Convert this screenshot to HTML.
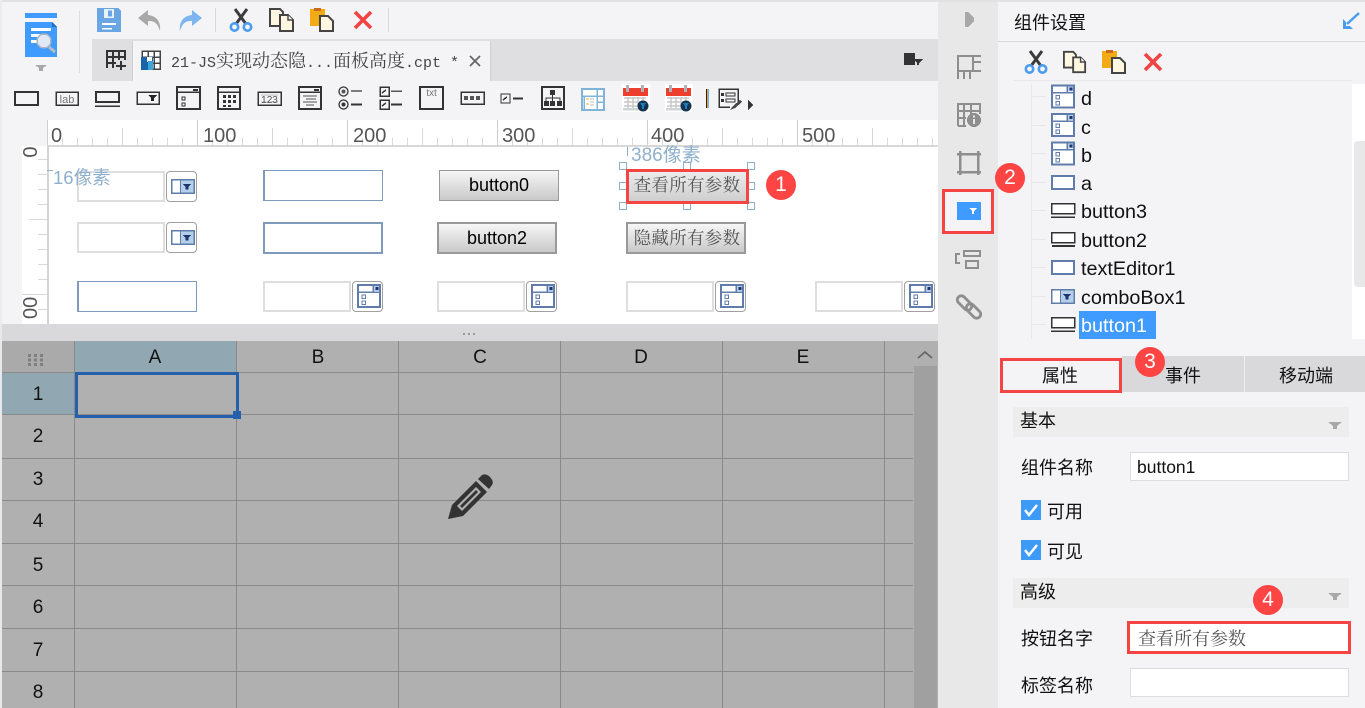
<!DOCTYPE html>
<html lang="zh"><head><meta charset="utf-8"><title>组件设置</title>
<style>
*{box-sizing:border-box}
html,body{margin:0;padding:0}
body{position:relative;width:1365px;height:708px;overflow:hidden;background:#f4f4f6;font-family:"Liberation Sans","Noto Sans CJK SC",sans-serif;color:#111}
.a{position:absolute}
.t{position:absolute;white-space:nowrap;line-height:1}
svg{position:absolute;overflow:visible;shape-rendering:crispEdges}
svg.s{shape-rendering:auto}
.box{position:absolute;background:#fff;border:2px solid #dedede}
.tb{position:absolute;background:#fff;border:2px solid #7f9aba}
.ib{position:absolute;background:#fff;border:1px solid #a0a0a0;border-radius:4px}
.btn{position:absolute;border:2px solid #999;background:linear-gradient(#f6f6f6,#c9c9c9);text-align:center;color:#000;font-size:18px}
.ser{font-family:"Liberation Serif","Noto Serif CJK SC",serif}
.h{position:absolute;width:8px;height:8px;border:1px solid #8fb0cc;background:#fff}
.red{position:absolute;border:3px solid #f44444}
.bd{position:absolute;width:30px;height:30px;border-radius:50%;background:#ff4444;color:#fff;font-size:21px;text-align:center;line-height:30px}
.ln{position:absolute;background:#8a8a8a}
.rn{position:absolute;left:2px;width:72px;text-align:center;font-size:19px;line-height:20px;color:#111}
.cn{position:absolute;top:348px;width:40px;text-align:center;font-size:19px;line-height:20px;color:#111}
.tr{position:absolute;left:1081px;font-size:19.8px;line-height:24px;white-space:nowrap;color:#111}
.st{position:absolute;left:1031px;width:15px;height:1px;background:#e8e8ea}
.lb{position:absolute;left:1021px;font-size:18px;line-height:22px;white-space:nowrap;color:#111}
.sec{position:absolute;left:1013px;width:336px;height:30px;background:#ededee;font-size:18px;line-height:28px;padding-left:7px;color:#111}
.ip{position:absolute;left:1130px;width:219px;height:29px;background:#fff;border:1px solid #dcdcdc}
.cb{position:absolute;left:1021px;width:20px;height:20px;background:#3d9bf5}
</style></head>
<body>
<svg width="0" height="0" style="position:absolute">
<defs>
<symbol id="cut" viewBox="0 0 24 24" overflow="visible"><path d="M6 1l11 15M18 1L7 16" stroke="#3c3c3c" stroke-width="3" fill="none"/><circle cx="5.500" cy="19" r="3.700" fill="none" stroke="#4a9cf0" stroke-width="2.600"/><circle cx="18.500" cy="19" r="3.700" fill="none" stroke="#4a9cf0" stroke-width="2.600"/></symbol>
<symbol id="copy" viewBox="0 0 26 24" overflow="visible"><path d="M1 1h10l3 3v14H1z" fill="#fff6e2" stroke="#444" stroke-width="2"/><path d="M11 7h8l5 5v11H11z" fill="#fff6e2" stroke="#444" stroke-width="2"/><path d="M19 7v5h5" fill="#fff" stroke="#444" stroke-width="1.500"/></symbol>
<symbol id="paste" viewBox="0 0 24 24" overflow="visible"><rect x="0" y="1" width="15" height="17" fill="#f2ab14"/><rect x="4" y="0" width="7" height="3" fill="#c96a1e"/><path d="M10 8h8l5 5v10H10z" fill="#fff6e2" stroke="#444" stroke-width="2"/></symbol>
<symbol id="del" viewBox="0 0 20 20" overflow="visible"><path d="M2 2l16 16M18 2L2 18" stroke="#f04545" stroke-width="3.600" fill="none"/></symbol>
<symbol id="combo" viewBox="0 0 24 15" overflow="visible"><rect x=".75" y=".75" width="22.500" height="13.500" fill="#fff" stroke="#5f7cab" stroke-width="1.500"/><rect x="9.500" y="1" width="13.500" height="13" fill="#b4cfea" stroke="#5f7cab"/><path d="M12 5h8l-2.500 3v2.500h-3V8z" fill="#22336e"/></symbol>
<symbol id="date" viewBox="0 0 24 24" overflow="visible"><rect x="1" y="1" width="22" height="22" fill="#fff" stroke="#5f7cab" stroke-width="2"/><path d="M1 8h22M16 1v7" stroke="#5f7cab" stroke-width="1.500"/><rect x="17" y="2" width="5" height="5" fill="#b4cfea"/><rect x="18.500" y="3" width="3" height="3" fill="#22336e"/><rect x="5" y="11" width="3.500" height="3.500" fill="#fff" stroke="#5f7cab"/><rect x="5" y="17" width="3.500" height="3.500" fill="#fff" stroke="#5f7cab"/></symbol>
<symbol id="btni" viewBox="0 0 24 15" overflow="visible"><rect x=".5" y=".5" width="23" height="10" fill="#fff" stroke="#333" stroke-width="1.500"/><path d="M0 14h24" stroke="#333" stroke-width="1.500"/></symbol>
<symbol id="cal" viewBox="0 0 28 28" overflow="visible"><rect width="28" height="28" fill="#fff"/><rect x="1" y="4" width="25" height="8" fill="#ee3f2e"/><rect x="4" y="1" width="3" height="7" fill="#a9b6bc"/><rect x="19" y="1" width="3" height="7" fill="#a9b6bc"/><path d="M2 14h22M2 18h22M2 22h18M6 13v11M11 13v11M16 13v9M21 13v5" stroke="#c8c8c8" stroke-width="1.500"/><rect x="1" y="24" width="16" height="2.500" fill="#cfd4d4"/><circle cx="21" cy="22" r="5.500" fill="#16344e"/><path d="M18 19h6l-2 3v3h-2v-3z" fill="#1a7fc0"/></symbol>
</defs>
</svg>

<div class="a" style="left:0;top:0;width:1365px;height:2px;background:#e2e2e4"></div>
<div class="a" style="left:0;top:0;width:2px;height:341px;background:#ececee"></div>

<!-- logo -->
<svg width="32" height="44" style="left:25px;top:13px"><rect x="0" y="0" width="32" height="5" fill="#3f9bff"/><path d="M0 9h27l5 5v30H0z" fill="#3f9bff"/><path d="M27 9v5h5z" fill="#1f6fc8"/><path d="M6 15h20v3H6zM6 21h10v3H6zM6 27h8v3H6z" fill="#fff"/><circle cx="19" cy="28" r="7" fill="#dfe9f4" stroke="#aab4c0" stroke-width="1.500"/><path d="M24 34l6 5" stroke="#b5bcc4" stroke-width="3"/></svg>
<svg width="12" height="6" style="left:35px;top:65px"><path d="M0 0h12L8 3v3H4V3z" fill="#a8a8a8"/></svg>
<div class="a" style="left:79px;top:11px;width:1px;height:62px;background:#dcdcde"></div>

<!-- main toolbar -->
<svg width="24" height="24" style="left:97px;top:8px"><path d="M0 0h21l3 3v21H0z" fill="#6ba6e4"/><rect x="7" y="1" width="10" height="9" fill="#e8f2fc"/><rect x="11" y="2.500" width="4" height="6" fill="#6ba6e4"/><path d="M5 15h14v2H5zM5 20h10v1.500H5z" fill="#fff"/></svg>
<svg class="s" width="26" height="24" style="left:137px;top:8px"><path d="M11 2L1 10l10 8v-5c7-.5 10 3 12 10 1-9-3-15-12-16z" fill="#a8a8a8"/></svg>
<svg class="s" width="26" height="24" style="left:177px;top:8px"><path d="M15 2l10 8-10 8v-5C8 12.500 5 16 3 23 2 14 6 8 15 7z" fill="#7cb5f0"/></svg>
<div class="a" style="left:215px;top:8px;width:1px;height:24px;background:#d8d8da"></div>
<svg class="s" width="24" height="24" style="left:229px;top:8px"><use href="#cut" width="24" height="24"/></svg>
<svg class="s" width="26" height="24" style="left:269px;top:8px"><use href="#copy" width="26" height="24"/></svg>
<svg class="s" width="24" height="24" style="left:310px;top:8px"><use href="#paste" width="24" height="24"/></svg>
<svg class="s" width="20" height="20" style="left:353px;top:10px"><use href="#del" width="20" height="20"/></svg>
<div class="a" style="left:388px;top:8px;width:1px;height:24px;background:#d8d8da"></div>

<!-- tabs -->
<div class="a" style="left:92px;top:39px;width:846px;height:42px;background:#dfdfe1"></div>
<div class="a" style="left:132px;top:41px;width:359px;height:40px;background:#f4f4f6;border-left:1px solid #d0d0d2;border-right:1px solid #d0d0d2"></div>
<svg width="21" height="21" style="left:106px;top:50px"><path d="M1 18V1h18v9M1 7h18M1 13h9M7 1v17M13 1v9" fill="none" stroke="#333" stroke-width="2"/><path d="M15 11v9M10 16h10" stroke="#333" stroke-width="2"/></svg>
<svg width="20" height="20" style="left:141px;top:50px"><path d="M1 1h18v18H1zM1 7h18M1 13h18M7 1v18M13 1v18" fill="#fff" stroke="#444" stroke-width="1.500"/><rect x="0" y="7" width="12" height="13" fill="#1a64a8"/><rect x="6" y="7" width="5" height="5" fill="#fff"/><rect x="7" y="11" width="5" height="9" fill="#3aa6e0"/></svg>
<div class="t" style="left:171px;top:51px;font-family:'Liberation Mono','Noto Serif CJK SC',monospace;font-size:15px;line-height:18px;color:#444">21-JS<span style="font-family:'Noto Serif CJK SC',serif;font-size:18px">实现动态隐</span>...<span style="font-family:'Noto Serif CJK SC',serif;font-size:18px">面板高度</span>.cpt *</div>
<svg width="12" height="12" style="left:469px;top:55px" class="s"><path d="M1 1l10 10M11 1L1 11" stroke="#666" stroke-width="1.800"/></svg>
<svg width="19" height="15" style="left:904px;top:53px"><path d="M0 0h11v6h8l-4 4v2h-2v-2l-2-2v4H0z" fill="#333"/></svg>

<!-- widget toolbar -->
<svg width="26" height="15" style="left:14px;top:91px"><rect x="1" y="1" width="23" height="13" fill="none" stroke="#333" stroke-width="2"/></svg>
<svg width="25" height="15" style="left:55px;top:91px"><rect x="1" y="1" width="22" height="13" fill="none" stroke="#333" stroke-width="1.500"/><text x="12" y="12" text-anchor="middle" font-size="11" fill="#777" font-family="Liberation Sans">lab</text></svg>
<svg width="25" height="16" style="left:95px;top:91px"><rect x="1" y="1" width="23" height="10" fill="none" stroke="#333" stroke-width="2"/><path d="M0 15h25" stroke="#333" stroke-width="1.500"/></svg>
<svg width="25" height="15" style="left:136px;top:91px"><rect x="1" y="1" width="22" height="12" fill="none" stroke="#333" stroke-width="1.500"/><path d="M12 4h9l-3 3v3h-3V7z" fill="#222"/></svg>
<svg width="25" height="24" style="left:176px;top:86px"><rect x="1" y="1" width="23" height="22" fill="none" stroke="#333" stroke-width="2"/><path d="M1 6h23" stroke="#333" stroke-width="1.500"/><rect x="17" y="3" width="5" height="2" fill="#333"/><path d="M6 11h3v3H6zM6 17h3v3H6z" fill="none" stroke="#333"/></svg>
<svg width="24" height="24" style="left:217px;top:86px"><rect x="1" y="1" width="22" height="22" fill="none" stroke="#333" stroke-width="2"/><path d="M1 6h22" stroke="#333" stroke-width="1.500"/><path d="M6 9h3v3H6zM11 9h3v3h-3zM16 9h3v3h-3zM6 14h3v3H6zM11 14h3v3h-3zM16 14h3v3h-3zM6 19h3v2H6zM11 19h3v2h-3z" fill="#333"/></svg>
<svg width="25" height="15" style="left:257px;top:91px"><rect x="1" y="1" width="23" height="13" fill="none" stroke="#333" stroke-width="1.500"/><path d="M4 4h17M4 11h17" stroke="#bbb"/><text x="12.500" y="12" text-anchor="middle" font-size="10" fill="#555" font-family="Liberation Sans">123</text></svg>
<svg width="24" height="24" style="left:298px;top:86px"><rect x="1" y="1" width="22" height="22" fill="none" stroke="#333" stroke-width="2"/><path d="M1 6h22" stroke="#333" stroke-width="1.500"/><rect x="16" y="3" width="5" height="2" fill="#333"/><path d="M5 10h14M8 13h10M5 16h14M8 19h8" stroke="#555"/></svg>
<svg class="s" width="24" height="24" style="left:338px;top:86px"><circle cx="5.500" cy="5.500" r="4.500" fill="none" stroke="#333" stroke-width="1.300"/><circle cx="5.500" cy="5.500" r="2" fill="#555"/><circle cx="5.500" cy="18.500" r="4.500" fill="none" stroke="#333" stroke-width="1.300"/><circle cx="5.500" cy="18.500" r="2" fill="#333"/><path d="M13 5h11" stroke="#555" stroke-width="1.500"/><path d="M13 18.500h11" stroke="#333" stroke-width="2"/></svg>
<svg width="24" height="24" style="left:379px;top:86px"><rect x="1" y="1" width="9" height="9" fill="none" stroke="#333" stroke-width="1.500"/><rect x="1" y="14" width="9" height="9" fill="none" stroke="#333" stroke-width="1.500"/><path d="M3 7l4-3M3 20l4-3" stroke="#333" stroke-width="1.500"/><path d="M12 5h11" stroke="#555" stroke-width="1.500"/><path d="M12 18.500h11" stroke="#333" stroke-width="2"/></svg>
<svg width="25" height="24" style="left:419px;top:86px"><rect x="1" y="1" width="23" height="22" fill="none" stroke="#333" stroke-width="2"/><text x="12.500" y="10" text-anchor="middle" font-size="10" fill="#777" font-family="Liberation Sans">txt</text></svg>
<svg width="25" height="15" style="left:460px;top:91px"><rect x="1" y="1" width="23" height="12" fill="none" stroke="#333" stroke-width="1.500"/><path d="M4 5h4v4H4zM10 5h4v4h-4zM16 5h4v4h-4z" fill="#555"/></svg>
<svg width="24" height="12" style="left:500px;top:93px"><rect x="1" y="1" width="9" height="9" fill="none" stroke="#333" stroke-width="1.300"/><path d="M3 7l4-3" stroke="#333" stroke-width="1.500"/><path d="M13 5.500h10" stroke="#333" stroke-width="2"/></svg>
<svg width="24" height="24" style="left:541px;top:86px"><rect x="1" y="1" width="22" height="22" fill="#f4f4f6" stroke="#333" stroke-width="2"/><rect x="9" y="4" width="5" height="5" fill="#333"/><path d="M11.500 9v3M5 15v-3h14v3M11.500 12v3" stroke="#333" fill="none"/><path d="M3 15h5v5H3zM9 15h5v5H9zM16 15h5v5h-5z" fill="#333"/></svg>
<svg width="24" height="23" style="left:581px;top:88px"><rect x="1" y="1" width="22" height="21" fill="#fff" stroke="#7fb4d8" stroke-width="2"/><path d="M2 8h20M16 1v21M16 14h7M3 8v14" stroke="#7fb4d8" stroke-width="1.500"/><path d="M5 11h3M5 16h3" stroke="#f0a830"/><path d="M9 11h4M9 14h4M9 17h4" stroke="#bbb"/></svg>
<svg class="s" width="28" height="28" style="left:622px;top:84px"><use href="#cal" width="28" height="28"/></svg>
<svg class="s" width="28" height="28" style="left:665px;top:84px"><use href="#cal" width="28" height="28"/></svg>
<div class="a" style="left:706px;top:89px;width:1px;height:19px;background:#222"></div><div class="a" style="left:707px;top:89px;width:1px;height:19px;background:#f0a030"></div><div class="a" style="left:708px;top:89px;width:1px;height:19px;background:#6ab4f0"></div>
<svg width="28" height="24" style="left:718px;top:88px"><path d="M20 17V1H1v18h11" fill="none" stroke="#333" stroke-width="1.500"/><path d="M3 5h3v3H3zM3 11h3v3H3z" fill="#333"/><path d="M8 5h9v3H8zM8 11h9v3H8z" fill="none" stroke="#333"/><path d="M12 22l3-4 7-6 2 2-7 6z" fill="#444"/></svg>
<svg width="5" height="10" style="left:748px;top:100px"><path d="M0 0l5 5-5 5z" fill="#333"/></svg>

<!-- ruler / canvas -->
<div class="a" style="left:48px;top:120px;width:890px;height:26px;background:#fff"></div>
<div class="a" style="left:47px;top:120px;width:891px;height:26px;background:repeating-linear-gradient(90deg,#cfcfcf 0,#cfcfcf 1px,transparent 1px,transparent 150px) 0 0/100% 26px no-repeat,repeating-linear-gradient(90deg,#d8d8d8 0,#d8d8d8 1px,transparent 1px,transparent 75px) 0 8px/100% 18px no-repeat,repeating-linear-gradient(90deg,#d8d8d8 0,#d8d8d8 1px,transparent 1px,transparent 15px) 0 18px/100% 8px no-repeat"></div>
<div class="a" style="left:47px;top:145px;width:891px;height:2px;background:#d8d8d8"></div>
<div class="t" style="left:51px;top:126px;font-size:20px;color:#555">0</div>
<div class="t" style="left:203px;top:126px;font-size:20px;color:#555">100</div>
<div class="t" style="left:353px;top:126px;font-size:20px;color:#555">200</div>
<div class="t" style="left:502px;top:126px;font-size:20px;color:#555">300</div>
<div class="t" style="left:651px;top:126px;font-size:20px;color:#555">400</div>
<div class="t" style="left:802px;top:126px;font-size:20px;color:#555">500</div>

<div class="a" style="left:22px;top:146px;width:25px;height:178px;background:#fff;overflow:hidden">
 <div class="a" style="left:0;top:148px;width:25px;height:1px;background:#d4d4d4"></div>
 <div class="a" style="left:7px;top:73px;width:18px;height:1px;background:#d8d8d8"></div>
 <div class="a" style="left:16px;top:0;width:9px;height:178px;background:repeating-linear-gradient(180deg,transparent 0,transparent 13px,#d8d8d8 13px,#d8d8d8 14px,transparent 14px,transparent 15px)"></div>
 <div class="t" style="left:-1px;top:-4px;width:20px;height:20px;font-size:20px;color:#555;transform:rotate(-90deg);transform-origin:10px 10px;text-align:center;line-height:20px">0</div>
 <div class="t" style="left:-1px;top:153px;width:20px;height:24px;font-size:20px;color:#555"><span style="position:absolute;left:0;top:0;width:20px;height:24px;line-height:20px;transform:rotate(-90deg);text-align:center;transform-origin:10px 10px;display:block">00</span></div>
</div>
<div class="a" style="left:47px;top:146px;width:2px;height:178px;background:#d4d4d4"></div>
<div class="a" style="left:49px;top:147px;width:889px;height:177px;background:#fff"></div>

<!-- widgets row 1 -->
<div class="box" style="left:77px;top:171px;width:88px;height:31px"></div>
<div class="ib" style="left:166px;top:171px;width:31px;height:31px"></div>
<svg width="24" height="15" style="left:171px;top:179px"><use href="#combo" width="24" height="15"/></svg>
<div class="tb" style="left:263px;top:170px;width:120px;height:31px;border-width:1px 1px 1px 2px"></div>
<div class="btn" style="left:439px;top:170px;width:120px;height:31px;line-height:28px;border-width:1.500px">button0</div>
<div class="btn ser" style="left:627px;top:170px;width:120px;height:32px;line-height:28px;border:1px solid #8fb0cc;background:linear-gradient(#ececec,#cfcfcf);color:#555;font-family:'Noto Serif CJK SC',serif;font-size:17.500px;letter-spacing:.3px">查看所有参数</div>
<div class="a" style="left:47px;top:170px;width:6px;height:1px;background:#8fb0cc"></div>
<div class="t" style="left:53px;top:169px;font-size:18.500px;color:#8fb0cc">16像素</div>
<div class="a" style="left:627px;top:147px;width:1px;height:9px;background:#8fb0cc"></div>
<div class="t" style="left:631px;top:146px;font-size:19px;color:#8fb0cc">386像素</div>
<div class="h" style="left:619px;top:162px"></div><div class="h" style="left:683px;top:162px"></div><div class="h" style="left:747px;top:162px"></div>
<div class="h" style="left:619px;top:182px"></div><div class="h" style="left:747px;top:182px"></div>
<div class="h" style="left:619px;top:202px"></div><div class="h" style="left:683px;top:202px"></div><div class="h" style="left:747px;top:202px"></div>
<div class="red" style="left:626px;top:169px;width:123px;height:35px"></div>
<div class="bd" style="left:766px;top:170px">1</div>

<!-- widgets row 2 -->
<div class="box" style="left:77px;top:222px;width:88px;height:31px"></div>
<div class="ib" style="left:166px;top:222px;width:31px;height:31px"></div>
<svg width="24" height="15" style="left:171px;top:230px"><use href="#combo" width="24" height="15"/></svg>
<div class="tb" style="left:263px;top:222px;width:120px;height:32px"></div>
<div class="btn" style="left:437px;top:222px;width:120px;height:32px;line-height:29px">button2</div>
<div class="btn" style="left:626px;top:222px;width:120px;height:32px;line-height:27px;color:#555;font-family:'Noto Serif CJK SC',serif;font-size:17.500px;letter-spacing:.3px;padding-left:2px">隐藏所有参数</div>

<!-- widgets row 3 -->
<div class="tb" style="left:77px;top:281px;width:120px;height:31px;border-width:1px 1px 1px 2px"></div>
<div class="box" style="left:263px;top:281px;width:88px;height:31px"></div><div class="ib" style="left:352px;top:281px;width:31px;height:31px"></div>
<svg width="24" height="24" style="left:357px;top:284px"><use href="#date" width="24" height="24"/></svg>
<div class="box" style="left:437px;top:281px;width:88px;height:31px"></div><div class="ib" style="left:526px;top:281px;width:31px;height:31px"></div>
<svg width="24" height="24" style="left:531px;top:284px"><use href="#date" width="24" height="24"/></svg>
<div class="box" style="left:626px;top:281px;width:88px;height:31px"></div><div class="ib" style="left:715px;top:281px;width:31px;height:31px"></div>
<svg width="24" height="24" style="left:720px;top:284px"><use href="#date" width="24" height="24"/></svg>
<div class="box" style="left:815px;top:281px;width:88px;height:31px"></div><div class="ib" style="left:904px;top:281px;width:31px;height:31px"></div>
<svg width="24" height="24" style="left:909px;top:284px"><use href="#date" width="24" height="24"/></svg>

<!-- splitter -->
<div class="a" style="left:2px;top:324px;width:936px;height:17px;background:#d9d9db"></div>
<div class="a" style="left:0;top:324px;width:2px;height:384px;background:#e8e8ea"></div>
<svg width="14" height="3" style="left:463px;top:333px"><path d="M0 0h2v2H0zM5 0h2v2H5zM10 0h2v2h-2z" fill="#999"/></svg>

<!-- grid -->
<div class="a" style="left:2px;top:341px;width:936px;height:367px;background:#b0b0b0"></div>
<div class="a" style="left:2px;top:341px;width:72px;height:31px;background:#aaa"></div>
<svg width="16" height="12" style="left:28px;top:354px"><path d="M0 0h3v3H0zM6 0h3v3H6zM12 0h3v3h-3zM0 4.500h3v3H0zM6 4.500h3v3H6zM12 4.500h3v3h-3zM0 9h3v3H0zM6 9h3v3H6zM12 9h3v3h-3z" fill="#808080"/></svg>
<div class="a" style="left:75px;top:341px;width:161px;height:31px;background:#91a8b2"></div>
<div class="a" style="left:2px;top:373px;width:72px;height:42px;background:#91a8b2"></div>
<div class="ln" style="left:74px;top:341px;width:1px;height:367px"></div>
<div class="ln" style="left:236px;top:341px;width:1px;height:367px"></div>
<div class="ln" style="left:398px;top:341px;width:1px;height:367px"></div>
<div class="ln" style="left:560px;top:341px;width:1px;height:367px"></div>
<div class="ln" style="left:722px;top:341px;width:1px;height:367px"></div>
<div class="ln" style="left:884px;top:341px;width:1px;height:367px"></div>
<div class="ln" style="left:2px;top:372px;width:911px;height:1px"></div>
<div class="ln" style="left:2px;top:414px;width:911px;height:1px"></div>
<div class="ln" style="left:2px;top:458px;width:911px;height:1px"></div>
<div class="ln" style="left:2px;top:500px;width:911px;height:1px"></div>
<div class="ln" style="left:2px;top:543px;width:911px;height:1px"></div>
<div class="ln" style="left:2px;top:585px;width:911px;height:1px"></div>
<div class="ln" style="left:2px;top:628px;width:911px;height:1px"></div>
<div class="ln" style="left:2px;top:671px;width:911px;height:1px"></div>
<div class="cn" style="left:135px">A</div><div class="cn" style="left:298px">B</div><div class="cn" style="left:460px">C</div><div class="cn" style="left:621px">D</div><div class="cn" style="left:783px">E</div>
<div class="rn" style="top:385px">1</div><div class="rn" style="top:427px">2</div><div class="rn" style="top:470px">3</div><div class="rn" style="top:512px">4</div><div class="rn" style="top:556px">5</div><div class="rn" style="top:598px">6</div><div class="rn" style="top:641px">7</div><div class="rn" style="top:683px">8</div>
<div class="a" style="left:75px;top:372px;width:164px;height:46px;border:3px solid #2560ad"></div>
<div class="a" style="left:233px;top:411px;width:8px;height:8px;background:#2560ad"></div>
<div class="a" style="left:913px;top:341px;width:25px;height:367px;background:#b0b0b0"></div>
<div class="a" style="left:914px;top:366px;width:23px;height:342px;background:#a0a0a0"></div>
<svg class="s" width="16" height="10" style="left:917px;top:350px"><path d="M1 8l7-6 7 6" fill="none" stroke="#666" stroke-width="1.800"/></svg>
<svg class="s" width="46" height="46" style="left:448px;top:474px"><path d="M0 45l4-14L28 7l11 11-24 24z" fill="#333"/><path d="M30 5l4-4c2-1 4-1 7 1 3 3 5 6 3 9l-3 4z" fill="#333"/><path d="M9 32L28 13l5 5-19 19z" fill="#b0b0b0"/><path d="M12 32L28 16l2 2-16 16z" fill="#333"/></svg>

<!-- side strip -->
<div class="a" style="left:938px;top:2px;width:60px;height:706px;background:#e8e8e9"></div>
<svg width="10" height="16" style="left:965px;top:12px"><path d="M0 0h3l6 6v3l-6 6H0z" fill="#a8a8a8"/></svg>
<svg width="24" height="24" style="left:957px;top:55px"><path d="M1 24V1h23M16 1v15M16 7h8M1 16h23M7 16v8M13 16v8" fill="none" stroke="#8e8e8e" stroke-width="2"/></svg>
<svg width="24" height="24" style="left:957px;top:103px"><path d="M1 23V1h22v10M1 8h22M1 15h8M1 23h8M7 1v22M14 1v10" fill="none" stroke="#8e8e8e" stroke-width="2"/><circle cx="17" cy="17" r="7" fill="#8e8e8e"/><path d="M16 16h2v5h-2zM16 12.500h2v2h-2z" fill="#e8e8e9"/></svg>
<svg width="24" height="24" style="left:957px;top:151px"><path d="M3 0v24M21 0v24M0 3h24M0 21h24" fill="none" stroke="#8e8e8e" stroke-width="2.500"/></svg>
<div class="a" style="left:942px;top:189px;width:52px;height:45px;background:#f4f4f6;border:3px solid #f44444"></div>
<svg width="24" height="18" style="left:957px;top:202px"><rect width="24" height="18" fill="#3f9bff"/><path d="M12 6h8l-3 3v3h-2V9z" fill="#fff"/></svg>
<svg width="26" height="20" style="left:955px;top:250px"><path d="M5 4H1v9h4" fill="none" stroke="#8e8e8e" stroke-width="2"/><rect x="9" y="1" width="16" height="5" fill="none" stroke="#8e8e8e" stroke-width="2.400"/><rect x="11" y="11" width="12" height="7" fill="none" stroke="#8e8e8e" stroke-width="2.400"/></svg>
<svg class="s" width="24" height="24" style="left:957px;top:295px"><rect x="-1" y="4" width="17" height="8" rx="4" transform="rotate(45 7.500 8)" fill="none" stroke="#8e8e8e" stroke-width="2.800"/><rect x="8" y="12" width="17" height="8" rx="4" transform="rotate(45 16.500 16)" fill="none" stroke="#8e8e8e" stroke-width="2.800"/></svg>
<div class="bd" style="left:995px;top:163px">2</div>

<!-- right panel -->
<div class="t" style="left:1014px;top:14px;font-size:18px;color:#111">组件设置</div>
<svg class="s" width="18" height="18" style="left:1342px;top:12px"><path d="M17 1L5 12" stroke="#4a9cf0" stroke-width="2.500"/><path d="M1 7v10h10l-3-3H4v-4z" fill="#4a9cf0"/></svg>
<div class="a" style="left:998px;top:41px;width:367px;height:1px;background:#d8d8da"></div>
<svg class="s" width="24" height="24" style="left:1024px;top:50px"><use href="#cut" width="24" height="24"/></svg>
<svg class="s" width="24" height="24" style="left:1063px;top:50px"><use href="#copy" width="24" height="24"/></svg>
<svg class="s" width="24" height="24" style="left:1102px;top:50px"><use href="#paste" width="24" height="24"/></svg>
<svg class="s" width="20" height="20" style="left:1143px;top:52px"><use href="#del" width="20" height="20"/></svg>
<div class="a" style="left:1013px;top:80px;width:339px;height:1px;background:#e8e8ea"></div>
<div class="a" style="left:1352px;top:84px;width:13px;height:255px;background:#fff"></div>
<div class="a" style="left:1354px;top:141px;width:11px;height:146px;background:#e8e8e8;border-radius:4px 0 0 4px"></div>
<div class="a" style="left:1031px;top:84px;width:1px;height:255px;background:#e8e8ea"></div>
<div class="st" style="top:96px"></div><div class="st" style="top:125px"></div><div class="st" style="top:153px"></div><div class="st" style="top:182px"></div><div class="st" style="top:210px"></div><div class="st" style="top:239px"></div><div class="st" style="top:267px"></div><div class="st" style="top:296px"></div><div class="st" style="top:324px"></div>
<svg width="24" height="25" style="left:1051px;top:84px"><use href="#date" width="24" height="25"/></svg>
<svg width="24" height="24" style="left:1051px;top:113px"><use href="#date" width="24" height="24"/></svg>
<svg width="24" height="25" style="left:1051px;top:141px"><use href="#date" width="24" height="25"/></svg>
<svg width="24" height="15" style="left:1051px;top:175px"><rect x="1" y="1" width="22" height="13" fill="#fff" stroke="#5f7cab" stroke-width="2"/></svg>
<svg width="24" height="15" style="left:1051px;top:203px"><use href="#btni" width="24" height="15"/></svg>
<svg width="24" height="15" style="left:1051px;top:232px"><rect x=".5" y=".5" width="23" height="10" fill="#fff" stroke="#333" stroke-width="1.500"/><path d="M1 14h23" stroke="#333" stroke-width="2"/></svg>
<svg width="24" height="15" style="left:1051px;top:260px"><rect x="1" y="1" width="22" height="13" fill="#fff" stroke="#5f7cab" stroke-width="2"/></svg>
<svg width="24" height="15" style="left:1051px;top:289px"><use href="#combo" width="24" height="15"/></svg>
<svg width="24" height="15" style="left:1051px;top:317px"><use href="#btni" width="24" height="15"/></svg>
<div class="tr" style="top:87px">d</div><div class="tr" style="top:116px">c</div><div class="tr" style="top:144px">b</div><div class="tr" style="top:172px">a</div><div class="tr" style="top:200px">button3</div><div class="tr" style="top:229px">button2</div><div class="tr" style="top:257px">textEditor1</div><div class="tr" style="top:286px">comboBox1</div>
<div class="a" style="left:1079px;top:311px;width:77px;height:28px;background:#3f9bff"></div>
<div class="tr" style="top:314px;color:#fff">button1</div>

<!-- property tabs -->
<div class="a" style="left:1122px;top:356px;width:243px;height:36px;background:#d9d9db"></div>
<div class="a" style="left:1244px;top:356px;width:1px;height:36px;background:#eeeef0"></div>
<div class="t" style="left:1042px;top:367px;font-size:18px">属性</div>
<div class="t" style="left:1165px;top:367px;font-size:18px">事件</div>
<div class="t" style="left:1279px;top:367px;font-size:18px">移动端</div>
<div class="red" style="left:1000px;top:358px;width:122px;height:35px"></div>
<div class="bd" style="left:1135px;top:347px">3</div>

<div class="sec" style="top:407px;line-height:29px">基本</div>
<svg width="14" height="7" style="left:1328px;top:422px"><path d="M0 0h14l-5 4v3H5V4z" fill="#a8a8a8"/></svg>
<div class="lb" style="top:457px">组件名称</div>
<div class="ip" style="top:452px;font-size:17.500px;line-height:29px;padding-left:6px;color:#111">button1</div>
<div class="cb" style="top:500px"></div>
<svg class="s" width="20" height="20" style="left:1021px;top:500px"><path d="M4 10l4 5 8-10" fill="none" stroke="#fff" stroke-width="2.500"/></svg>
<div class="lb" style="left:1047px;top:501px">可用</div>
<div class="cb" style="top:540px"></div>
<svg class="s" width="20" height="20" style="left:1021px;top:540px"><path d="M4 10l4 5 8-10" fill="none" stroke="#fff" stroke-width="2.500"/></svg>
<div class="lb" style="left:1047px;top:541px">可见</div>
<div class="sec" style="top:578px">高级</div>
<svg width="14" height="7" style="left:1328px;top:593px"><path d="M0 0h14l-5 4v3H5V4z" fill="#a8a8a8"/></svg>
<div class="bd" style="left:1253px;top:585px">4</div>
<div class="lb" style="top:628px">按钮名字</div>
<div class="a" style="left:1127px;top:621px;width:224px;height:33px;background:#fff;border:3px solid #f44444"></div>
<div class="t" style="left:1138px;top:629px;font-family:'Noto Serif CJK SC',serif;font-size:18px;color:#555">查看所有参数</div>
<div class="lb" style="top:675px">标签名称</div>
<div class="ip" style="top:668px"></div>
</body></html>
